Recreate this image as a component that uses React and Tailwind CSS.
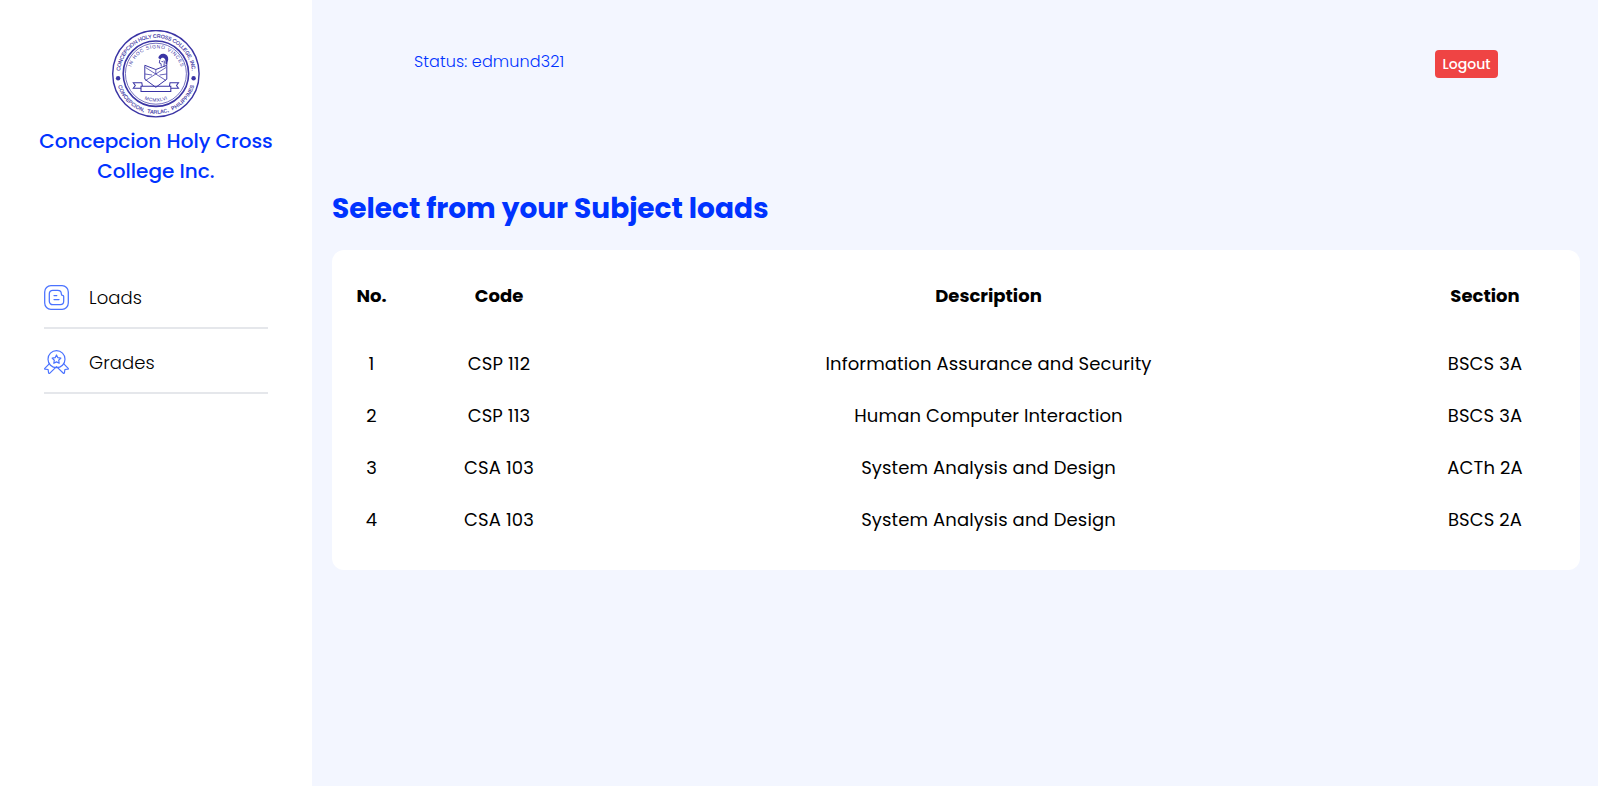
const navy = "#3a34a4";

function Seal() {
  return (
    <svg viewBox="0 0 88 88" className="size-[88px]" fill="none" stroke={navy}>
      <defs>
        <path id="outerTop" d="M7.900 44a36.100 36.100 0 0 1 72.200 0" />
        <path id="outerBottom" d="M4.200 44a39.800 39.800 0 0 0 79.600 0" />
        <path id="innerTop" d="M18.200 44a25.800 25.800 0 0 1 51.600 0" />
        <path id="innerBottom" d="M16.300 44a27.700 27.700 0 0 0 55.400 0" />
      </defs>
      <circle cx="43.900" cy="43.700" r="43.200" strokeWidth="1.400" />
      <circle cx="43.900" cy="43.700" r="32.700" strokeWidth="1.600" />
      <circle cx="43.900" cy="43.700" r="30.500" strokeWidth="0.700" />
      <g fill={navy} stroke="none" fontFamily="Liberation Sans, sans-serif">
        <g stroke={navy} strokeWidth="0.150">
          <text fontSize="5.200" textAnchor="middle">
            <textPath href="#outerTop" startOffset="50%" textLength="107">CONCEPCION HOLY CROSS COLLEGE, INC.</textPath>
          </text>
          <text fontSize="5.200" textAnchor="middle">
            <textPath href="#outerBottom" startOffset="50%" textLength="101" xmlSpace="preserve">CONCEPCION,  TARLAC,  PHILIPPINES</textPath>
          </text>
        </g>
        <text fontSize="4.900" textAnchor="middle">
          <textPath href="#innerTop" startOffset="50%" textLength="66">IN HOC SIGNO VINCES</textPath>
        </text>
        <text fontSize="4.900" textAnchor="middle">
          <textPath href="#innerBottom" startOffset="50%" textLength="24">MCMXLVI</textPath>
        </text>
        <circle cx="6.100" cy="48.300" r="2.200" />
        <circle cx="81.600" cy="48.300" r="2.200" />
        <path d="M46.300 28c.5-3 3-4.700 5.700-4.200 2.900.6 4.500 3 4.200 5.800-.2 1.900-1.200 3.200-.7 5.200l-1.700-.4c-.7-1.700.1-3.400-.6-4.900-.8-1.500-2.500-2.100-3.900-1.300l-.8 1.300z" />
      </g>
      <path d="M47.800 29.800l-.5 3.200 1.700.5.300 3M52 30.500c1 2-.5 4 .2 6M49.500 31.500l1.700.3" strokeWidth="0.900" />
      <path d="M32.800 35.300l11 4.200 11-4.200v13.900L43.800 57.300l-11-8.100z" strokeWidth="1" />
      <path d="M33.500 37.500l20.500 13M54 37.500l-20.500 13M33 44l7 1M54.500 44l-7 1M43.800 39.500v4.500" strokeWidth="0.750" />
      <path d="M29 56.300h29.800v5.200H29zM29 58.200h-7.700l2-2.700-2-2.700h8.500l.6 3.500M58.800 58.200h7.700l-2-2.700 2-2.700H58l-.6 3.500" strokeWidth="1.050" />
    </svg>
  );
}

function LoadsIcon() {
  return (
    <svg viewBox="0 0 25 25" className="size-[25px]" fill="none" stroke="#4a72ff" strokeWidth="1.250" strokeLinecap="round" strokeLinejoin="round">
      <rect x="0.7" y="0.7" width="23.600" height="23.600" rx="6.200" />
      <path d="M8.700 5.300h5.100c2.100 0 3.500 1.500 3.500 3.400 0 1.400.4 1.700 1.300 1.700.7 0 1.100.5 1.100 1.100v4.800c0 1.900-1.500 3.400-3.400 3.400H8.700c-1.900 0-3.400-1.500-3.400-3.400V8.700c0-1.900 1.500-3.400 3.400-3.400z" />
      <path d="M10 10.500h2.800M10 14.600h5" />
    </svg>
  );
}

function GradesIcon() {
  return (
    <svg viewBox="0 0 25 25" className="size-[25px]" fill="none" stroke="#4a72ff" strokeWidth="1.200" strokeLinecap="round" strokeLinejoin="round">
      <circle cx="12.500" cy="9.200" r="8.500" />
      <path d="M12.500 5l1.350 2.700 3 .45-2.150 2.100.5 3-2.700-1.400-2.700 1.400.5-3-2.150-2.100 3-.45z" />
      <path d="M5.200 13.800L.8 18.300c-.3.400-.1.900.4.900l2.900.3.500 3.500c.1.500.6.700 1 .3l6.900-6.700 6.900 6.700c.4.400.9.200 1-.3l.5-3.500 2.900-.3c.5 0 .7-.5.4-.9l-4.400-4.500" />
    </svg>
  );
}

function NavItem({ icon, children }) {
  return (
    <a href="#" className="flex h-[65px] items-center gap-5 border-b-2 border-gray-200 pt-1 text-lg font-light tracking-[0.1px] text-black">
      {icon}
      {children}
    </a>
  );
}

const rows = [
  ["1", "CSP 112", "Information Assurance and Security", "BSCS 3A"],
  ["2", "CSP 113", "Human Computer Interaction", "BSCS 3A"],
  ["3", "CSA 103", "System Analysis and Design", "ACTh 2A"],
  ["4", "CSA 103", "System Analysis and Design", "BSCS 2A"],
];

export default function App() {
  return (
    <div className="flex h-screen w-full overflow-hidden bg-[#f3f6ff] font-['Poppins','Inter',sans-serif] text-black">
      <aside className="flex w-[312px] shrink-0 flex-col bg-white">
        <div className="flex flex-col items-center pt-[30px]">
          <Seal />
          <h1 className="mt-2 w-[250px] text-center text-xl font-medium leading-[30px] text-[#0033ff]">
            Concepcion Holy Cross College Inc.
          </h1>
        </div>
        <nav className="mt-[78px] flex flex-col px-11">
          <NavItem icon={<LoadsIcon />}>Loads</NavItem>
          <NavItem icon={<GradesIcon />}>Grades</NavItem>
        </nav>
      </aside>

      <main className="flex min-w-0 flex-1 flex-col pl-5 pr-[18px]">
        <header className="flex h-[128px] items-start justify-between px-[82px] pt-[50px]">
          <p className="text-base font-light leading-[23px] tracking-[0.11px] text-[#0033ff]">Status: edmund321</p>
          <button className="h-7 w-[63px] rounded bg-[#ef4444] text-sm font-medium leading-7 text-white">Logout</button>
        </header>

        <h2 className="mt-[61px] text-[28px] font-bold leading-10 text-[#0033ff]">Select from your Subject loads</h2>

        <section className="mt-[21px] rounded-xl bg-white py-6 text-center text-lg tracking-[0.12px]">
          <div className="mb-[21px] grid h-[43px] grid-cols-[79px_176px_803px_190px] items-center font-bold tracking-normal">
            <span>No.</span>
            <span>Code</span>
            <span>Description</span>
            <span>Section</span>
          </div>
          {rows.map((row, i) => (
            <div key={i} className="grid h-[52px] grid-cols-[79px_176px_803px_190px] items-center">
              {row.map((cell, j) => <div key={j}>{cell}</div>)}
            </div>
          ))}
        </section>
      </main>
    </div>
  );
}
